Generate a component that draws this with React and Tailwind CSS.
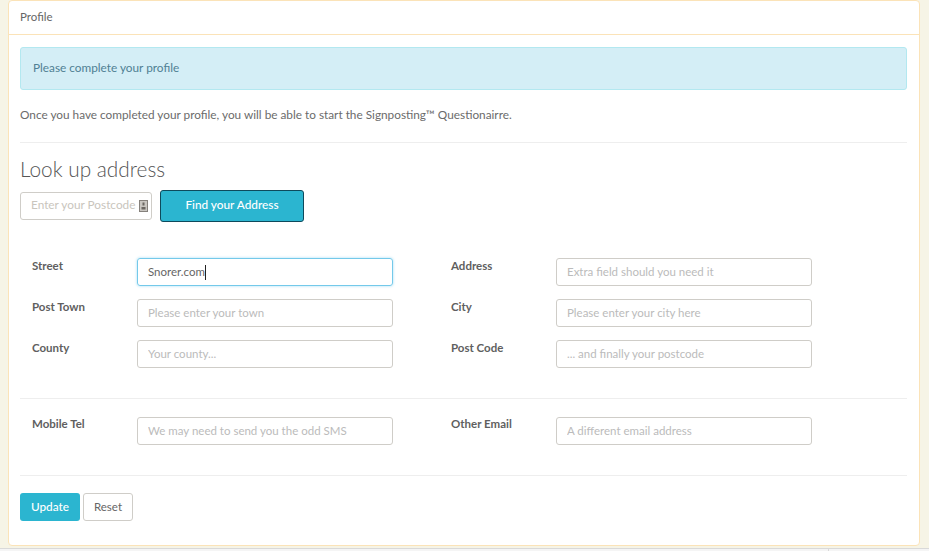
const Field = ({ label, placeholder, value, labelTop = 'pt-px' }) => (
  <div className="flex w-[419px] pl-3">
    <label className={`w-[105px] text-[11.5px] leading-[14px] font-bold text-[#5f5f5f] ${labelTop}`}>{label}</label>
    {value ? (
      <div className="flex h-7 w-[256px] items-center rounded-[3px] border border-[#74c9ea] px-[10px] text-[11.5px] text-[#666] shadow-[0_0_3px_#a5dcf2]">
        {value}
        <span className="h-[15px] w-px bg-[#222]"></span>
      </div>
    ) : (
      <input
        placeholder={placeholder}
        className="h-7 w-[256px] rounded-[3px] border border-[#cfcdc8] bg-white px-[10px] pb-[2px] text-[11.5px] text-[#666] outline-none placeholder:text-[#bbbbbb]"
      />
    )}
  </div>
);

const App = () => {
  return (
    <div className="h-[551px] w-[929px] overflow-hidden bg-[#f6f4e6] font-['Lato','Liberation_Sans',sans-serif] text-[#666]">
      <div className="ml-2 flex h-[546px] w-[912px] flex-col rounded-[4px] border border-[#fbe3b8] bg-white">
        <div className="flex h-[34px] items-center border-b border-[#fbe3b8] pb-[2px] pl-[11px] text-[11.5px] text-[#666]">Profile</div>

        <div className="flex flex-col pt-3 pr-3 pl-[11px]">
          <div className="flex h-[43px] items-center rounded-[3px] border border-[#b3e8f0] bg-[#d4eef6] pb-[2px] pl-3 text-[11.8px] text-[#4f8093]">
            Please complete your profile
          </div>

          <p className="mt-[18px] text-[11.8px] leading-[14px] text-[#6b6b6b]">
            Once you have completed your profile, you will be able to start the Signposting™ Questionairre.
          </p>

          <hr className="mt-5 border-[#eeeeee]" />

          <h2 className="mt-[13px] mb-[2px] text-[20.8px] leading-[26px] font-light text-[#555]">Look up address</h2>

          <div className="mt-[6px] flex items-center gap-2">
            <div className="flex h-7 w-[132px] items-center justify-between rounded-[3px] border border-[#cfcdc8] pr-[3px] pb-[2px] pl-[10px] text-[11.8px] text-[#c9c5bd]">
              <span>Enter your Postcode</span>
              <svg className="mt-[2px]" width="9" height="12" viewBox="0 0 9 12">
                <rect x="0.5" y="0.5" width="8" height="11" fill="#c9c6c1" stroke="#85817c" />
                <rect x="3.5" y="2.5" width="2" height="3" fill="#6b6762" />
                <rect x="2.5" y="7" width="4" height="2.5" fill="#6b6762" />
              </svg>
            </div>
            <button className="h-8 w-[144px] rounded-[3px] border border-[#0e4a5c] bg-[#2bb5d0] pb-[2px] text-[11.8px] font-medium text-white">
              Find your Address
            </button>
          </div>

          <div className="mt-9 flex flex-col gap-[13px]">
            <div className="flex">
              <Field label="Street" value="Snorer.com" />
              <Field label="Address" placeholder="Extra field should you need it" />
            </div>
            <div className="flex">
              <Field label="Post Town" placeholder="Please enter your town" />
              <Field label="City" placeholder="Please enter your city here" />
            </div>
            <div className="flex">
              <Field label="County" placeholder="Your county..." />
              <Field label="Post Code" placeholder="... and finally your postcode" />
            </div>
          </div>

          <hr className="mt-[30px] border-[#eeeeee]" />

          <div className="mt-[18px] flex">
            <Field labelTop="pt-0" label="Mobile Tel" placeholder="We may need to send you the odd SMS" />
            <Field labelTop="pt-0" label="Other Email" placeholder="A different email address" />
          </div>

          <hr className="mt-[30px] border-[#eeeeee]" />

          <div className="mt-[17px] flex gap-[3px]">
            <button className="h-7 w-[60px] rounded-[3px] bg-[#2bb5d0] text-[11.8px] font-medium text-white">Update</button>
            <button className="h-7 w-[50px] rounded-[3px] border border-[#cfcdc8] bg-white text-[11.5px] text-[#666]">Reset</button>
          </div>
        </div>
      </div>

      <div className="mt-[2px] flex h-[3px] border-t border-[#d9d9d9] bg-[#f5f5f5]">
        <div className="ml-[828px] w-px bg-[#d9d9d9]"></div>
      </div>
    </div>
  );
};

export default App;
